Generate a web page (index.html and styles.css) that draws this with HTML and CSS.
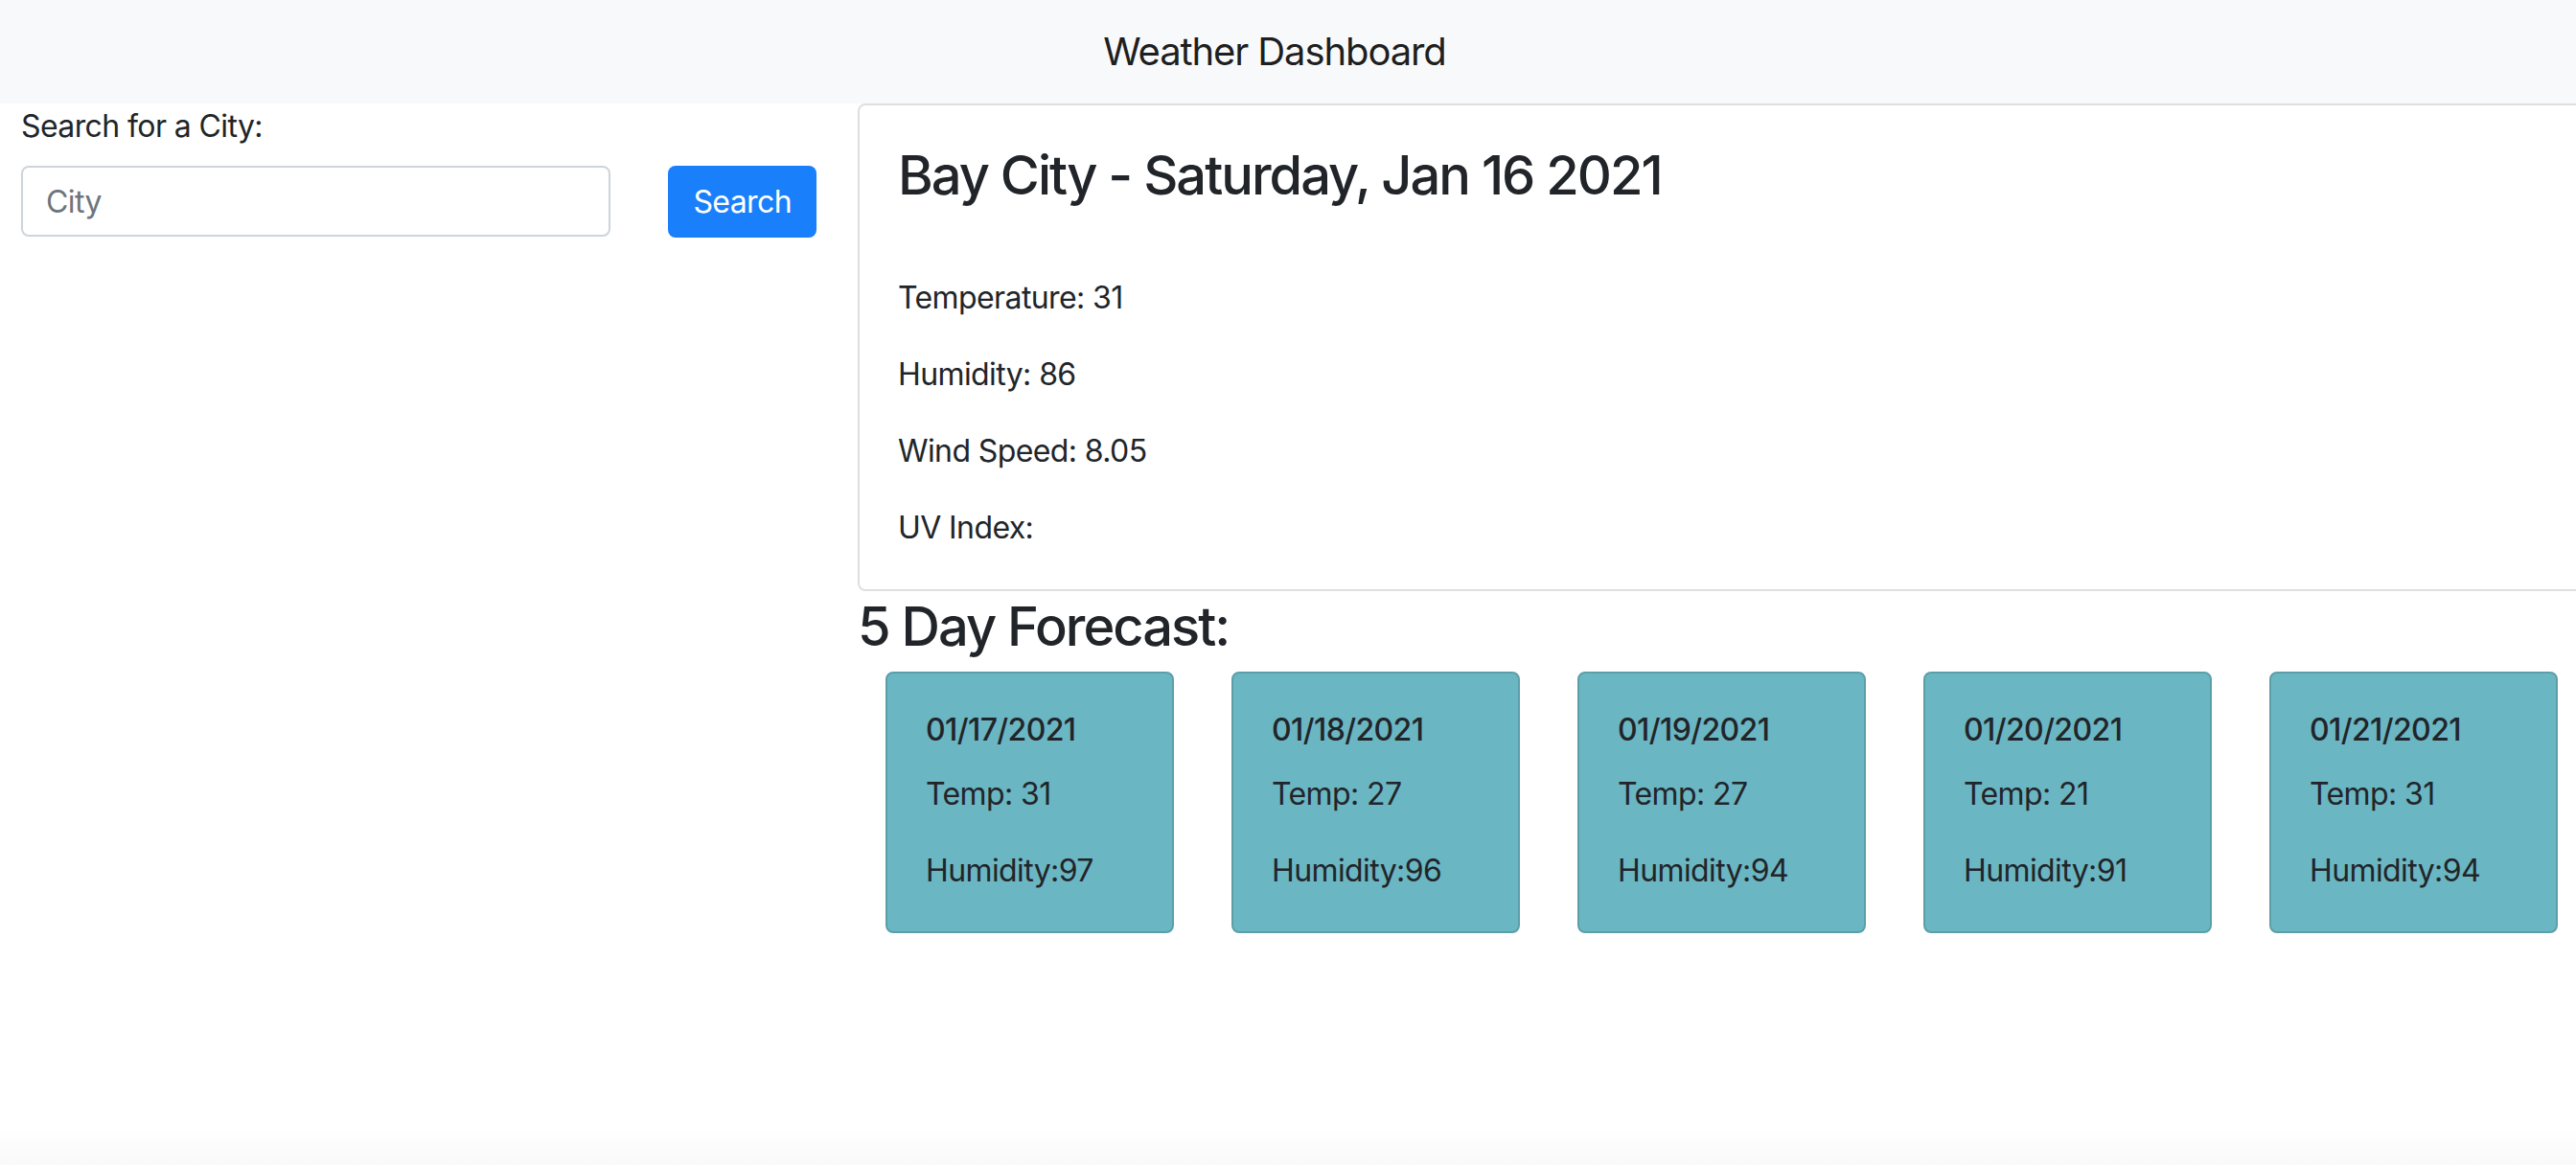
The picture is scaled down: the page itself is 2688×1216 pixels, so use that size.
FILE: index.html
```html
<!DOCTYPE html>
<html lang="en">
<head>
<meta charset="utf-8">
<title>Weather Dashboard</title>
<link rel="stylesheet" href="styles.css">
</head>
<body>
<header class="navbar">
  <span class="brand">Weather Dashboard</span>
</header>
<div class="layout">
  <aside class="search-col">
    <label class="search-label" for="city">Search for a City:</label>
    <div class="search-row">
      <input id="city" class="city-input" type="text" placeholder="City">
      <button class="btn-search" type="button">Search</button>
    </div>
  </aside>
  <main class="weather-col">
    <section class="current-card">
      <h3 class="city-title">Bay City - Saturday, Jan 16 2021</h3>
      <p class="stat">Temperature: 31</p>
      <p class="stat">Humidity: 86</p>
      <p class="stat">Wind Speed: 8.05</p>
      <p class="stat">UV Index:</p>
    </section>
    <h3 class="forecast-title">5 Day Forecast:</h3>
    <div class="forecast-row">
      <div class="day-card">
        <h6 class="day-date">01/17/2021</h6>
        <p class="day-line">Temp: 31</p>
        <p class="day-line">Humidity:97</p>
      </div>
      <div class="day-card">
        <h6 class="day-date">01/18/2021</h6>
        <p class="day-line">Temp: 27</p>
        <p class="day-line">Humidity:96</p>
      </div>
      <div class="day-card">
        <h6 class="day-date">01/19/2021</h6>
        <p class="day-line">Temp: 27</p>
        <p class="day-line">Humidity:94</p>
      </div>
      <div class="day-card">
        <h6 class="day-date">01/20/2021</h6>
        <p class="day-line">Temp: 21</p>
        <p class="day-line">Humidity:91</p>
      </div>
      <div class="day-card">
        <h6 class="day-date">01/21/2021</h6>
        <p class="day-line">Temp: 31</p>
        <p class="day-line">Humidity:94</p>
      </div>
    </div>
  </main>
</div>
</body>
</html>
```

FILE: styles.css
```css
html {
  height: 100%;
}

body {
  margin: 0;
  min-height: 100%;
  overflow: hidden;
  font-family: Inter, "Liberation Sans", sans-serif;
  font-size: 32px;
  line-height: 48px;
  letter-spacing: -0.6px;
  color: #212529;
  background: linear-gradient(to bottom, #ffffff calc(100% - 40px), #f9f9f9 100%);
}

.navbar {
  height: 108px;
  background: #f8f9fa;
  display: flex;
  align-items: center;
  justify-content: center;
  padding-right: 28px;
  box-sizing: border-box;
}

.brand {
  font-size: 40px;
  line-height: 60px;
  letter-spacing: -1.1px;
  color: rgba(0, 0, 0, 0.9);
}

.layout {
  display: flex;
  align-items: flex-start;
}

.search-col {
  flex: 0 0 auto;
  width: 830px;
  padding-left: 22px;
  margin-right: 43px;
}

.search-label {
  display: block;
  margin-bottom: 17px;
}

.search-row {
  display: flex;
  gap: 60px;
}

.city-input {
  width: 616px;
  height: 74px;
  box-sizing: border-box;
  border: 2px solid #ced4da;
  border-radius: 8px;
  padding: 0 24px;
  font-family: inherit;
  font-size: 32px;
  letter-spacing: -0.6px;
  color: #495057;
  background: #fff;
  outline: none;
}

.city-input::placeholder {
  color: #6c757d;
}

.btn-search {
  height: 75px;
  padding: 0 26px;
  border: none;
  border-radius: 8px;
  background: #1a7ffb;
  color: #fff;
  font-family: inherit;
  font-size: 32px;
  letter-spacing: -0.6px;
}

.weather-col {
  flex: 0 0 auto;
  width: 1840px;
}

.current-card {
  border: 2px solid #dfdfdf;
  border-radius: 8px;
  padding: 40px 40px 40px;
}

.city-title {
  margin: 0 0 70px;
  font-size: 56px;
  line-height: 67px;
  font-weight: 550;
  letter-spacing: -2px;
}

.stat {
  margin: 0 0 32px;
}

.stat:last-child {
  margin-bottom: 0;
}

.forecast-title {
  margin: 4px 0 13px;
  font-size: 56px;
  line-height: 67px;
  font-weight: 550;
  letter-spacing: -2px;
}

.forecast-row {
  display: flex;
  gap: 60px;
  margin-left: 29px;
}

.day-card {
  width: 301px;
  height: 273px;
  box-sizing: border-box;
  background: #6bb6c3;
  border: 2px solid #5b9fa9;
  border-radius: 8px;
  padding: 35px 40px 40px;
}

.day-date {
  margin: 0 0 19px;
  font-size: 32px;
  line-height: 48px;
  font-weight: 500;
}

.day-line {
  margin: 0 0 32px;
}

.day-line:last-child {
  margin-bottom: 0;
}
```
